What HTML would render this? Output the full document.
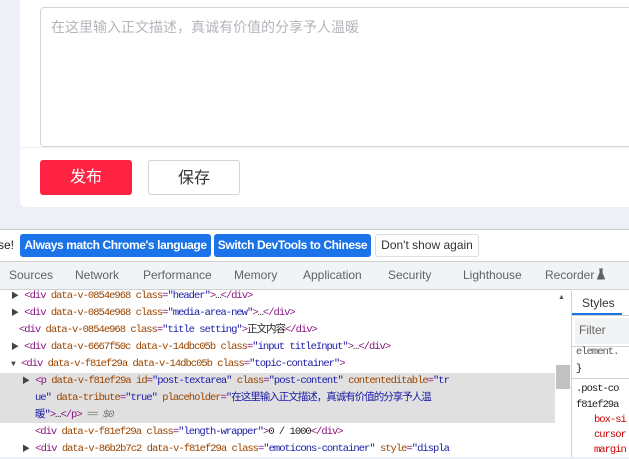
<!DOCTYPE html>
<html><head><meta charset="utf-8"><style>
*{margin:0;padding:0;box-sizing:border-box}
body{width:629px;height:457px;overflow:hidden;background:#eef0f7;position:relative;font-family:"Liberation Sans","Noto Sans CJK SC",sans-serif}
.abs{position:absolute}
.card{left:20px;top:-10px;width:620px;height:217px;background:#fff;border-radius:6px}
.ta{left:40px;top:7px;width:600px;height:140px;border:1px solid #d4d4d8;border-radius:4px;color:#b4b6bc;font-size:14px;padding:9px 10px}
.sep{left:20px;top:147px;width:609px;height:1px;background:#eef0f4}
.btn{top:160px;width:92px;height:35px;border-radius:3px;font-size:16px;text-align:center;line-height:35px}
.dev{left:0;top:229px;width:629px;height:228px;background:#fff;border-top:1px solid #cbcdd1}
.ib{top:234px;height:23px;border-radius:3px;font-size:12px;line-height:23px;padding:0 2px;white-space:nowrap;overflow:hidden;text-align:center}
.tabs{left:0;top:261px;width:629px;height:29px;background:#f1f3f4;border-top:1px solid #d0d0d0;border-bottom:1px solid #d0d0d0}
.tab{top:268px;font-size:12px;color:#5f6368;white-space:nowrap}
.row{left:0;font-family:"Liberation Mono","Noto Sans CJK SC",monospace;font-size:10.5px;letter-spacing:-1px;white-space:nowrap;color:#881280;height:17px;line-height:17px}
.a{color:#994500}.v{color:#1a1aa6}.t{color:#222}.g{color:#777}
.tri{font-size:8px;color:#444;letter-spacing:0}
</style></head><body>
<div class="abs card"></div>
<div class="abs ta">在这里输入正文描述，真诚有价值的分享予人温暖</div>
<div class="abs sep"></div>
<div class="abs btn" style="left:40px;background:#fe2343;color:#fff">发布</div>
<div class="abs btn" style="left:148px;border:1px solid #d4d4d8;color:#333;background:#fff">保存</div>

<div class="abs dev"></div>
<div class="abs ib" style="left:-4px;color:#222">se!</div>
<div class="abs ib" style="left:20px;width:191px;background:#1a73e8;color:#fff;font-weight:bold;letter-spacing:-0.4px;font-size:12px">Always match Chrome's language</div>
<div class="abs ib" style="left:214px;width:157px;background:#1a73e8;color:#fff;font-weight:bold;letter-spacing:-0.4px;font-size:12px">Switch DevTools to Chinese</div>
<div class="abs ib" style="left:375px;width:104px;border:1px solid #dadce0;color:#333;line-height:21px">Don't show again</div>
<div class="abs tabs"></div>
<div class="abs tab" style="left:9px">Sources</div>
<div class="abs tab" style="left:75px">Network</div>
<div class="abs tab" style="left:143px">Performance</div>
<div class="abs tab" style="left:234px">Memory</div>
<div class="abs tab" style="left:303px">Application</div>
<div class="abs tab" style="left:388px">Security</div>
<div class="abs tab" style="left:463px">Lighthouse</div>
<div class="abs tab" style="left:545px">Recorder</div>
<svg class="abs" style="left:597px;top:268px" width="8" height="12" viewBox="0 0 8 12"><path d="M2 1h4M3 1v4L0.5 11h7L5 5V1" fill="#5f6368" stroke="#5f6368"/></svg>

<div class="abs" style="left:0;top:373px;width:555px;height:50px;background:#e0e0e0"></div>
<div class="abs row" style="top:288px;left:11px"><span class="tri">▶</span> &lt;div <span class="a">data-v-0854e968</span> <span class="a">class</span>=<span class="v">"header"</span>&gt;<span class="t">…</span>&lt;/div&gt;</div>
<div class="abs row" style="top:305px;left:11px"><span class="tri">▶</span> &lt;div <span class="a">data-v-0854e968</span> <span class="a">class</span>=<span class="v">"media-area-new"</span>&gt;<span class="t">…</span>&lt;/div&gt;</div>
<div class="abs row" style="top:322px;left:19px">&lt;div <span class="a">data-v-0854e968</span> <span class="a">class</span>=<span class="v">"title setting"</span>&gt;<span class="t">正文内容</span>&lt;/div&gt;</div>
<div class="abs row" style="top:339px;left:11px"><span class="tri">▶</span> &lt;div <span class="a">data-v-6667f50c</span> <span class="a">data-v-14dbc05b</span> <span class="a">class</span>=<span class="v">"input titleInput"</span>&gt;<span class="t">…</span>&lt;/div&gt;</div>
<div class="abs row" style="top:356px;left:11px"><span class="tri">▼</span> &lt;div <span class="a">data-v-f81ef29a</span> <span class="a">data-v-14dbc05b</span> <span class="a">class</span>=<span class="v">"topic-container"</span>&gt;</div>
<div class="abs row" style="top:373px;left:22px"><span class="tri">▶</span> &lt;p <span class="a">data-v-f81ef29a</span> <span class="a">id</span>=<span class="v">"post-textarea"</span> <span class="a">class</span>=<span class="v">"post-content"</span> <span class="a">contenteditable</span>=<span class="v">"tr</span></div>
<div class="abs row" style="top:390px;left:35px"><span class="v">ue"</span> <span class="a">data-tribute</span>=<span class="v">"true"</span> <span class="a">placeholder</span>=<span class="v">"在这里输入正文描述，真诚有价值的分享予人温</span></div>
<div class="abs row" style="top:407px;left:35px"><span class="v">暖"</span>&gt;<span class="t">…</span>&lt;/p&gt; <span class="g">== <i>$0</i></span></div>
<div class="abs row" style="top:424px;left:35px">&lt;div <span class="a">data-v-f81ef29a</span> <span class="a">class</span>=<span class="v">"length-wrapper"</span>&gt;<span class="t">0 / 1000</span>&lt;/div&gt;</div>
<div class="abs row" style="top:441px;left:22px"><span class="tri">▶</span> &lt;div <span class="a">data-v-86b2b7c2</span> <span class="a">data-v-f81ef29a</span> <span class="a">class</span>=<span class="v">"emoticons-container"</span> <span class="a">style</span>=<span class="v">"displa</span></div>

<div class="abs" style="left:555px;top:291px;width:16px;height:166px;background:#fff"></div>
<div class="abs" style="left:558px;top:294px;font-size:7px;color:#555">▲</div>
<div class="abs" style="left:556px;top:365px;width:14px;height:24px;background:#c1c1c1"></div>
<div class="abs" style="left:571px;top:291px;width:58px;height:166px;background:#fff;border-left:1px solid #d0d0d0"></div>
<div class="abs" style="left:582px;top:296px;font-size:12px;color:#333">Styles</div>
<div class="abs" style="left:572px;top:313px;width:50px;height:2px;background:#1a73e8"></div>
<div class="abs" style="left:572px;top:315px;width:57px;height:1px;background:#d0d0d0"></div>
<div class="abs" style="left:575px;top:318px;width:54px;height:26px;background:#f1f3f4"></div>
<div class="abs" style="left:579px;top:323px;font-size:12px;color:#666">Filter</div>
<div class="abs" style="left:572px;top:346px;width:57px;height:1px;background:#d0d0d0"></div>
<div class="abs row" style="left:576px;top:344px;color:#555">element.</div>
<div class="abs row" style="left:576px;top:361px;color:#222">}</div>
<div class="abs" style="left:572px;top:378px;width:57px;height:1px;background:#d0d0d0"></div>
<div class="abs row" style="left:576px;top:381px;color:#222">.post-co</div>
<div class="abs row" style="left:576px;top:397px;color:#222">f81ef29a</div>
<div class="abs row" style="left:594px;top:412px;color:#c80000">box-si</div>
<div class="abs row" style="left:594px;top:427px;color:#c80000">cursor</div>
<div class="abs row" style="left:594px;top:442px;color:#c80000">margin</div>
</body></html>
